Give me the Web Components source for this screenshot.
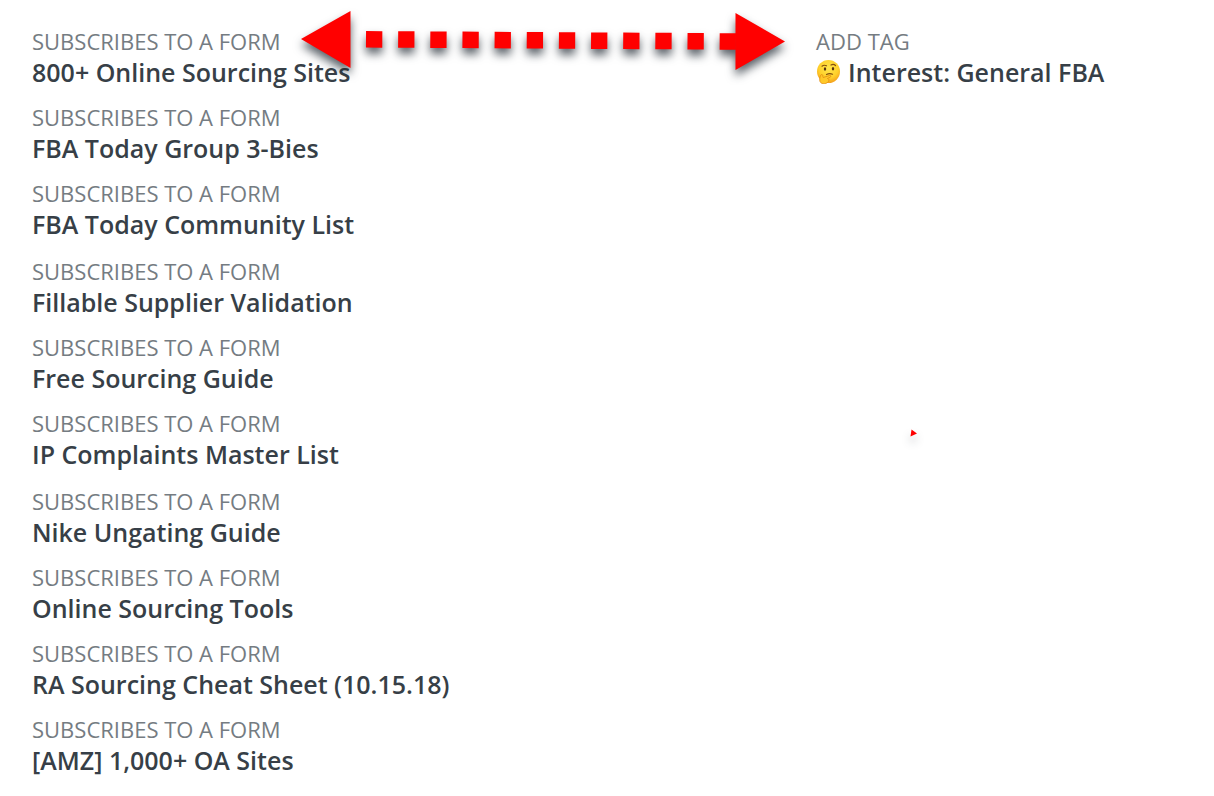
<!DOCTYPE html>
<html lang="en">
<head>
<meta charset="utf-8">
<meta name="viewport" content="width=device-width, initial-scale=1">
<title>Automation rules</title>
<style>
  body { margin: 0; background: #fff; font-family: "Open Sans", "Noto Sans", sans-serif; }
</style>
</head>
<body>
<rule-board>
  <rule-item label="Subscribes to a form">800+ Online Sourcing Sites</rule-item>
  <rule-item label="Subscribes to a form">FBA Today Group 3-Bies</rule-item>
  <rule-item label="Subscribes to a form">FBA Today Community List</rule-item>
  <rule-item label="Subscribes to a form">Fillable Supplier Validation</rule-item>
  <rule-item label="Subscribes to a form">Free Sourcing Guide</rule-item>
  <rule-item label="Subscribes to a form">IP Complaints Master List</rule-item>
  <rule-item label="Subscribes to a form">Nike Ungating Guide</rule-item>
  <rule-item label="Subscribes to a form">Online Sourcing Tools</rule-item>
  <rule-item label="Subscribes to a form">RA Sourcing Cheat Sheet (10.15.18)</rule-item>
  <rule-item label="Subscribes to a form">[AMZ] 1,000+ OA Sites</rule-item>
  <link-arrow slot="overlay"></link-arrow>
  <stray-mark slot="overlay"></stray-mark>
  <rule-item slot="actions" label="Add tag"><thinking-face></thinking-face>Interest: General FBA</rule-item>
</rule-board>

<script>
const define = (name, html) => customElements.define(name, class extends HTMLElement {
  constructor() {
    super();
    this.attachShadow({ mode: "open" }).innerHTML = html;
  }
  connectedCallback() {
    const label = this.shadowRoot.querySelector(".label");
    if (label) label.textContent = this.getAttribute("label").toUpperCase();
  }
});

define("rule-board", `
  <style>
    :host { display: grid; grid-template-columns: 15fr 7fr; position: relative; padding: 26px 32px 8px; }
    .column { display: flex; flex-direction: column; gap: 14px; min-width: 0; }
    ::slotted(rule-item:nth-child(4)), ::slotted(rule-item:nth-child(7)) { margin-top: 2px; }
  </style>
  <section class="column" aria-label="Triggers"><slot></slot></section>
  <section class="column" aria-label="Actions"><slot name="actions"></slot></section>
  <slot name="overlay"></slot>`);

define("rule-item", `
  <style>
    :host { display: block; }
    .label { margin: 0; font-size: 22px; line-height: 30px; color: #757c82; }
    .name { display: flex; align-items: center; margin: 0; font-size: 25px; line-height: 32px; font-weight: 600; color: #373f47; }
  </style>
  <p class="label"></p>
  <h2 class="name"><slot></slot></h2>`);

/* Two-headed dotted arrow lying over the board. */
define("link-arrow", `
  <style>
    :host { display: block; position: absolute; left: 290px; top: 0; width: 510px; height: 90px; pointer-events: none; }
    svg { display: block; overflow: visible; filter: drop-shadow(0 6px 5px rgba(20,30,40,.7)); }
  </style>
  <svg width="510" height="90" viewBox="290 0 510 90" fill="#f00" aria-hidden="true">
    <path d="M301 39 350.500 11V68ZM785 41.500 735.500 13V70Z"/>
    <path d="M366 39.300 738 41.500" stroke="#f00" stroke-width="16.500" stroke-dasharray="16.300 15.850"/>
  </svg>`);

define("stray-mark", `
  <style>
    :host { display: block; position: absolute; left: 900px; top: 424px; pointer-events: none; }
    svg { display: block; overflow: visible; filter: drop-shadow(0 6px 4px rgba(20,30,40,.3)); }
  </style>
  <svg width="24" height="24" viewBox="900 424 24 24" aria-hidden="true"><path fill="#f00" d="M911.500 429.500 917 433.500 910.500 436.500Z"/></svg>`);

define("thinking-face", `
  <style>
    :host { display: block; width: 32px; height: 24px; }
    svg { display: block; }
  </style>
  <svg width="24" height="24" viewBox="0 0 24 24" role="img" aria-label="Thinking face">
    <defs>
      <radialGradient id="skin" cx=".5" cy=".35" r=".65">
        <stop offset="0" stop-color="#ffe64d"/><stop offset=".65" stop-color="#ffd02a"/><stop offset="1" stop-color="#f4a01c"/>
      </radialGradient>
    </defs>
    <circle cx="12.500" cy="11.500" r="11.500" fill="url(#skin)"/>
    <g fill="none" stroke="#85510f" stroke-width="1.200" stroke-linecap="round">
      <path d="M6 6.200Q8 4.500 10.500 5.800M15 5Q17.500 3.600 19.500 5.500"/>
      <path d="M10.500 14.500Q13.500 12.800 16.500 14.200"/>
    </g>
    <ellipse cx="9" cy="9" rx="1.200" ry="1.700" fill="#5a3510"/>
    <ellipse cx="17" cy="8.700" rx="1.200" ry="1.700" fill="#5a3510"/>
    <path d="M4.600 15.500C5.500 13.800 7 14.500 6.900 16.500L7.200 17.500 13.500 15.500C15.200 15.200 15.300 16.800 14 17.300L11.500 18.500C13.500 19 13 21.500 11.500 22.500 9 24.500 5 24 4 21.500 3.400 19.500 3.800 17 4.600 15.500Z" fill="#ffc928" stroke="#e18a12" stroke-width=".8"/>
  </svg>`);
</script>
</body>
</html>
